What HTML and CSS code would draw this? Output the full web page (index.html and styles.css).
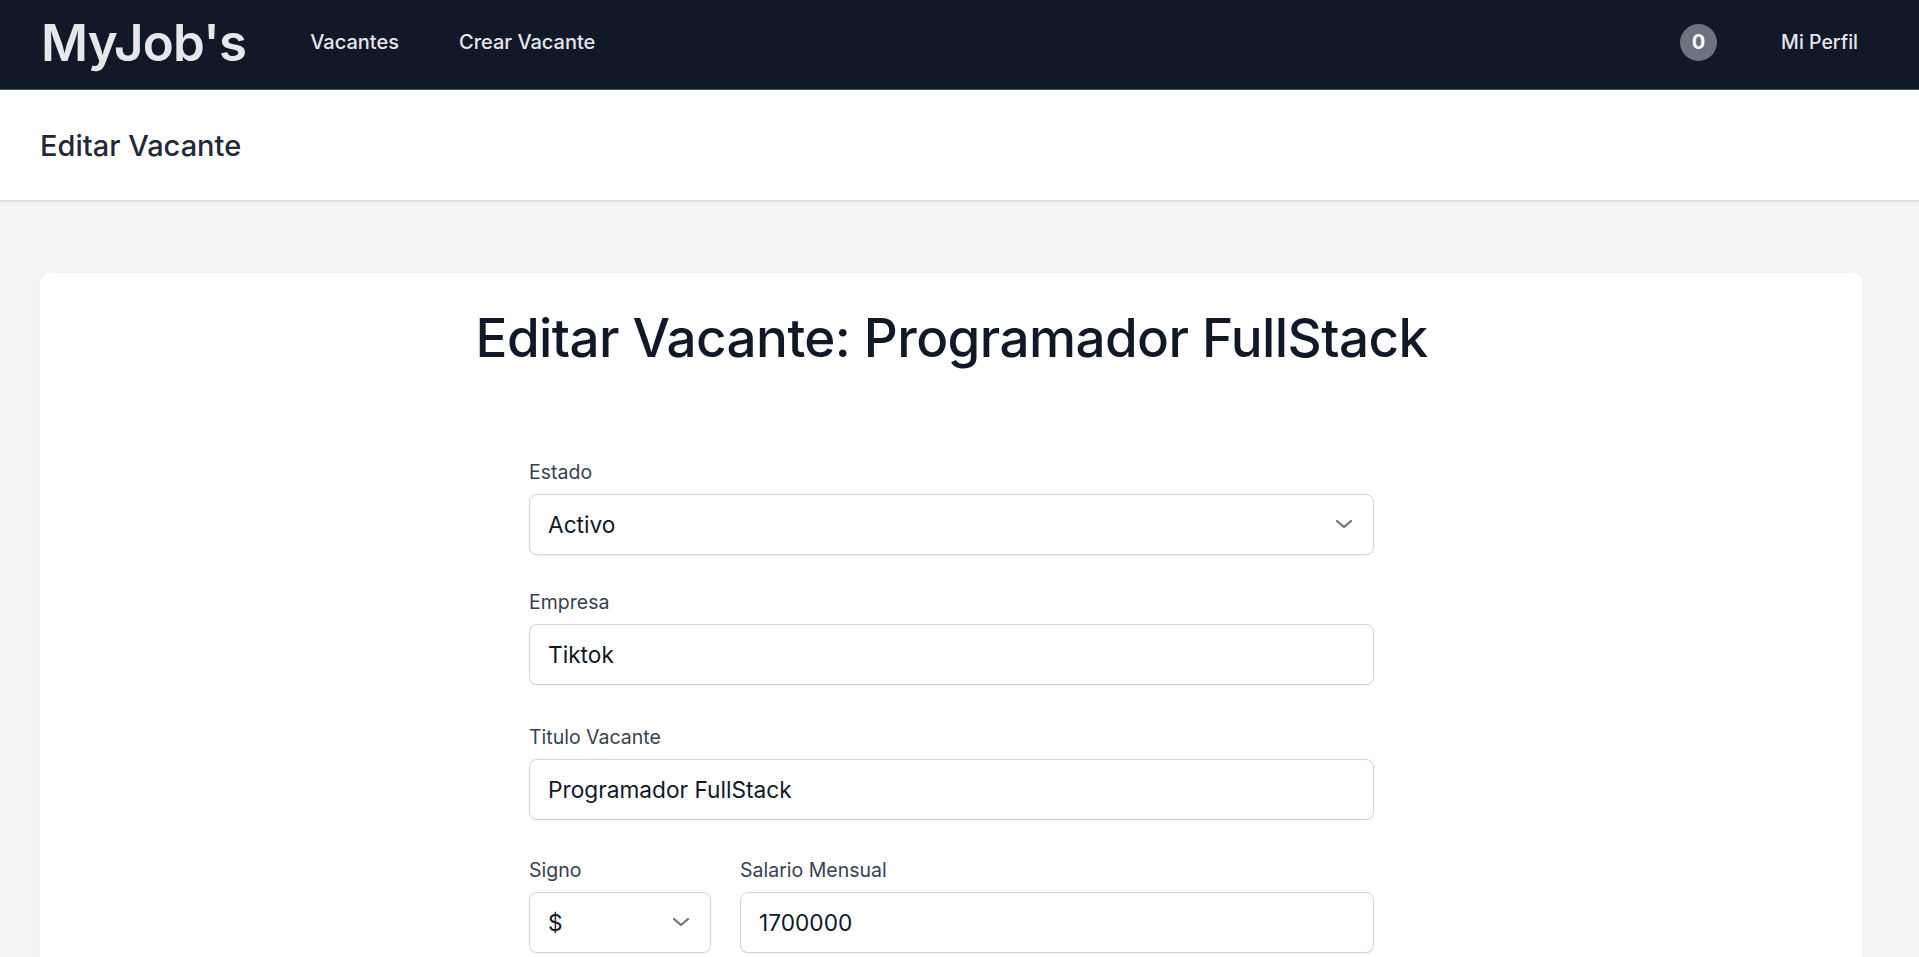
FILE: index.html
```html
<!DOCTYPE html>
<html lang="es">
<head>
<meta charset="utf-8">
<title>Editar Vacante</title>
<link rel="stylesheet" href="styles.css">
</head>
<body>
<nav class="nav">
  <div class="nav-left">
    <a class="logo" href="#">MyJob's</a>
    <a class="nav-link" href="#">Vacantes</a>
    <a class="nav-link" href="#">Crear Vacante</a>
  </div>
  <div class="nav-right">
    <span class="badge">0</span>
    <a class="nav-link profile" href="#">Mi Perfil</a>
  </div>
</nav>
<header class="page-header">
  <h2>Editar Vacante</h2>
</header>
<main class="page">
  <section class="card">
    <h1 class="title">Editar Vacante: Programador FullStack</h1>
    <form class="form">
      <div class="field field-first">
        <label class="label">Estado</label>
        <div class="select-wrap">
          <select class="control select"><option>Activo</option><option>Inactivo</option></select>
          <svg class="chevron" width="18" height="10" viewBox="0 0 18 10"><path d="M2 2l7 6 7-6" fill="none" stroke="#6b7280" stroke-width="2.2" stroke-linecap="round" stroke-linejoin="round"/></svg>
        </div>
      </div>
      <div class="field field-second">
        <label class="label">Empresa</label>
        <input class="control" type="text" value="Tiktok">
      </div>
      <div class="field field-third">
        <label class="label">Titulo Vacante</label>
        <input class="control" type="text" value="Programador FullStack">
      </div>
      <div class="field row">
        <div class="col">
          <label class="label">Signo</label>
          <div class="select-wrap">
            <select class="control select"><option>$</option><option>€</option></select>
            <svg class="chevron" width="18" height="10" viewBox="0 0 18 10"><path d="M2 2l7 6 7-6" fill="none" stroke="#6b7280" stroke-width="2.2" stroke-linecap="round" stroke-linejoin="round"/></svg>
          </div>
        </div>
        <div class="col">
          <label class="label">Salario Mensual</label>
          <input class="control" type="text" value="1700000">
        </div>
      </div>
    </form>
  </section>
</main>
</body>
</html>
```

FILE: styles.css
```css
* { box-sizing: border-box; }
html, body { margin: 0; padding: 0; }
body {
  font-family: Inter, "Liberation Sans", sans-serif;
  background: #f3f4f6;
  color: #111827;
}
a { text-decoration: none; }

.nav {
  height: 90px;
  background: #111827;
  border-bottom: 1px solid #4b5563;
  display: flex;
  align-items: center;
  justify-content: space-between;
  padding: 0 61px 5px 41px;
}
.nav-left, .nav-right { display: flex; align-items: center; }
.logo {
  font-size: 51px;
  font-weight: 600;
  color: #e5e7eb;
  letter-spacing: -0.7px;
  margin-right: 64px;
  line-height: 1;
}
.nav-link {
  font-size: 20px;
  font-weight: 500;
  color: #e5e7eb;
  margin-right: 60px;
}
.nav-link.profile { margin-right: 0; font-size: 19.5px; }
.badge {
  width: 37px;
  height: 37px;
  border-radius: 50%;
  background: #6b7280;
  color: #fff;
  font-weight: 700;
  font-size: 20px;
  display: flex;
  align-items: center;
  justify-content: center;
  margin-right: 64px;
}

.page-header {
  background: #fff;
  height: 110px;
  display: flex;
  align-items: center;
  padding-left: 40px;
  box-shadow: 0 1px 3px rgba(0,0,0,0.1), 0 1px 2px rgba(0,0,0,0.06);
  position: relative;
}
.page-header h2 {
  margin: 0;
  font-size: 29px;
  font-weight: 500;
  color: #1f2937;
}

.page { padding: 73px 56px 60px 40px; }
.card {
  background: #fff;
  border-radius: 10px;
  box-shadow: 0 1px 2px rgba(0,0,0,0.05);
  padding: 34px 0 200px;
}
.title {
  margin: 0;
  text-align: center;
  font-size: 53px;
  font-weight: 500;
  color: #111827;
  line-height: 62px;
  letter-spacing: -0.6px;
}
.form {
  width: 845px;
  margin: 91px auto 0;
  display: flex;
  flex-direction: column;
}
.field { margin-bottom: 36px; }
.field-first { margin-bottom: 35px; }
.field-second { margin-bottom: 40px; }
.field-third { margin-bottom: 38px; }
.label {
  display: block;
  font-size: 19.5px;
  font-weight: 400;
  color: #374151;
  line-height: 24px;
  margin-bottom: 10px;
}
.control {
  display: block;
  width: 100%;
  height: 61px;
  border: 1px solid #d1d5db;
  border-radius: 8px;
  background: #fff;
  font-family: Inter, "Liberation Sans", sans-serif;
  font-size: 22.7px;
  color: #111827;
  padding: 0 18px;
  box-shadow: 0 1px 2px rgba(0,0,0,0.05);
  outline: none;
}
.select-wrap { position: relative; }
.select { appearance: none; -webkit-appearance: none; }
.chevron {
  position: absolute;
  right: 21px;
  top: 25px;
  pointer-events: none;
}
.row {
  display: grid;
  grid-template-columns: 182px 1fr;
  gap: 29px;
}
```
